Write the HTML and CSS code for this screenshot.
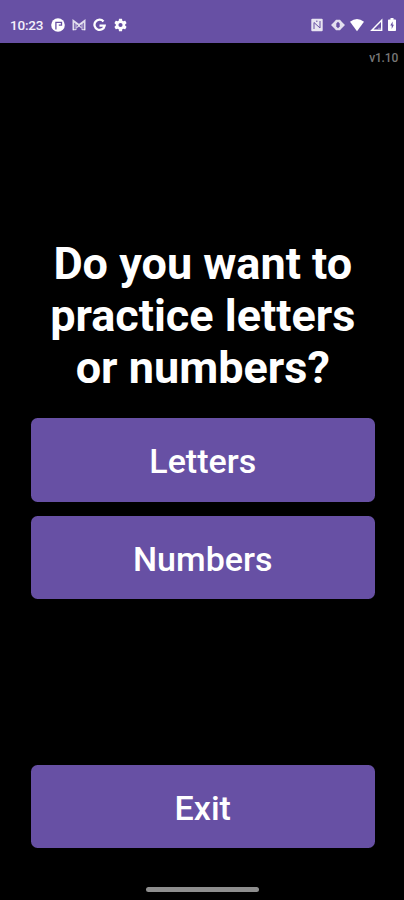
FILE: index.html
```
<!DOCTYPE html>
<html lang="en">
<head>
<meta charset="utf-8">
<title>Practice</title>
<link rel="stylesheet" href="styles.css">
</head>
<body>
<header class="status">
  <span class="time">10:23</span>
  <div class="icons left">
    <svg width="14" height="14" viewBox="0 0 14 14"><circle cx="7" cy="7" r="6.8" fill="#fff"/><path d="M4.900 11.400V4.300h5.600v2.800H7.800" fill="none" stroke="#6750a4" stroke-width="1.300"/></svg>
    <svg width="14" height="14" viewBox="0 0 14 14" fill="none" stroke="#fff"><path d="M1.400 12.300V2.800L7 7l5.600-4.200v9.500" stroke-width="1.800" opacity=".8"/><path d="M4 12V5M10 12V5M1 11.700h3M10 11.700h3" stroke-width="1" opacity=".75"/><path d="M4.500 9.800L7 7.800l2.500 2" stroke-width="1.200" opacity=".7"/></svg>
    <svg width="13" height="14" viewBox="0 0 13 14" fill="none" stroke="#fff" stroke-width="2.300"><path d="M10.500 3.500A5.100 5.100 0 1 0 11.600 7.700H6.500"/></svg>
    <svg width="13" height="14" viewBox="2 2 20 20"><path fill="#fff" d="M19.140 12.940c.04-.3.06-.61.06-.94 0-.32-.02-.64-.07-.94l2.030-1.580a.49.49 0 0 0 .12-.61l-1.920-3.320a.49.49 0 0 0-.59-.22l-2.390.96c-.5-.38-1.030-.7-1.620-.94l-.36-2.540a.48.48 0 0 0-.48-.41h-3.840a.47.47 0 0 0-.47.41l-.36 2.540c-.59.24-1.130.57-1.620.94l-2.390-.96a.48.48 0 0 0-.59.22L2.740 8.870a.47.47 0 0 0 .12.61l2.030 1.580c-.05.3-.09.63-.09.94s.02.64.07.94l-2.030 1.580a.49.49 0 0 0-.12.61l1.920 3.320c.12.22.37.29.59.22l2.390-.96c.5.38 1.030.7 1.620.94l.36 2.540c.05.24.24.41.48.41h3.840c.24 0 .44-.17.47-.41l.36-2.540c.59-.24 1.130-.56 1.620-.94l2.390.96c.22.08.47 0 .59-.22l1.920-3.320a.47.47 0 0 0-.12-.61zM12 15.200a3.200 3.200 0 1 1 0-6.400 3.200 3.200 0 0 1 0 6.400z"/></svg>
  </div>
  <div class="icons right">
    <svg width="12" height="14" viewBox="0 0 12 14"><rect x=".3" y=".8" width="11.400" height="12.400" rx="1" fill="#fff" opacity=".85"/><path d="M3 11V4.500L9 10V3M5 3.200h1.500" fill="none" stroke="#6750a4" stroke-width="1"/></svg>
    <svg class="vibrate" width="14" height="14" viewBox="0 0 14 14"><path d="M5 1.800h4l1.500 1.800L14 7l-3.500 3.400L9 12.200H5l-1.500-1.800L0 7l3.500-3.400z" fill="#fff" opacity=".82"/><path d="M7 3.800L8.700 5.500v3L7 10.200 5.300 8.500v-3z" fill="#6750a4"/></svg>
    <svg width="14" height="14" viewBox="0 0 14 14"><path d="M0 3.700Q7-1.500 14 3.700L7 13.200z" fill="#fff"/></svg>
    <svg width="13" height="14" viewBox="0 0 13 14"><path d="M1.800 12.300L11.700 2.200v10.100z" fill="none" stroke="#fff" stroke-width="1.400"/><path d="M8 10.300h3" stroke="#fff" opacity=".4"/></svg>
    <svg width="8" height="14" viewBox="0 0 8 14"><path d="M2.500 0h3v1.500h1.700q.8 0 .8.800v9.900q0 .8-.8.800H.8q-.8 0-.8-.8V2.300q0-.8.800-.8h1.700z" fill="#fff"/><path d="M4.600 3.500L2.300 7.600h1.400V11l2.200-4.200H4.600z" fill="#6750a4"/></svg>
  </div>
</header>
<main class="screen">
  <div class="version">v1.10</div>
  <h1 class="title">Do you want to<br>practice letters<br>or numbers?</h1>
  <div class="choices">
    <button class="btn">Letters</button>
    <button class="btn">Numbers</button>
  </div>
  <button class="btn exit">Exit</button>
  <div class="handle"></div>
</main>
</body>
</html>
```
FILE: styles.css
```
* { box-sizing: border-box; }
body {
  margin: 0;
  height: 900px;
  background: #000;
  color: #fff;
  font-family: Roboto, sans-serif;
  display: flex;
  flex-direction: column;
  overflow: hidden;
}
.status {
  height: 42.5px;
  flex: none;
  background: #6750a4;
  display: flex;
  align-items: center;
  padding: 6.5px 8px 0 10px;
}
.time { width: 41px; font-size: 13.5px; font-weight: 500; letter-spacing: -.2px; color: #f4f0fb; }
.icons { display: flex; align-items: center; }
.icons svg { display: block; flex: none; }
.left { gap: 7.2px; }
.right { margin-left: auto; gap: 5.5px; }
.right .vibrate { margin-left: 2px; }
.screen {
  flex: 1;
  display: flex;
  flex-direction: column;
  align-items: stretch;
  padding: 7px 29px 0 30.5px;
}
.version {
  align-self: flex-end;
  margin-right: -23px;
  font-size: 12px;
  font-weight: 500;
  line-height: 16px;
  letter-spacing: -.2px;
  color: #777;
}
.title {
  margin: 172px 0 0;
  font-size: 45px;
  font-weight: 700;
  line-height: 52.3px;
  text-align: center;
  white-space: nowrap;
}
.choices { display: flex; flex-direction: column; gap: 14.5px; margin-top: 24px; }
.btn {
  display: block;
  width: 100%;
  height: 83.3px;
  padding: 2px 0 0;
  border: 0;
  border-radius: 6.5px;
  background: #6750a4;
  color: #fff;
  font: 500 34px/1 Roboto, sans-serif;
}
.exit { margin-top: 165.5px; }
.handle {
  align-self: center;
  width: 113px;
  height: 5px;
  margin-top: 38.6px;
  border-radius: 2.5px;
  background: #8e8e8e;
}
```
